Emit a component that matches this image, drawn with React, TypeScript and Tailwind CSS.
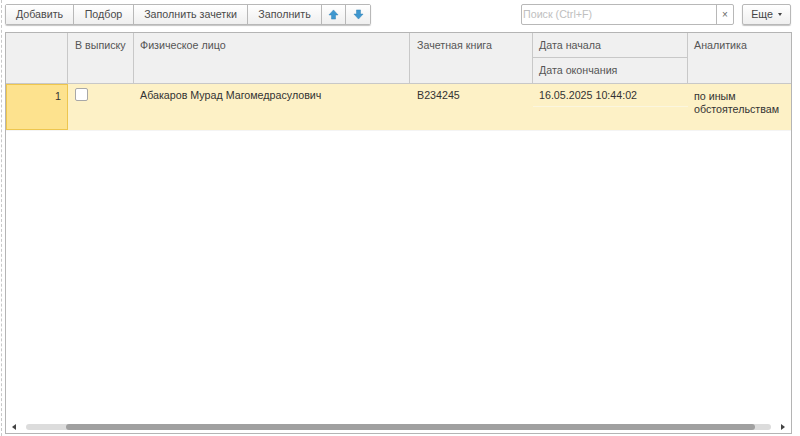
const btn =
  "flex h-full items-center justify-center border-r border-[#b8b8b8] last:border-r-0 bg-gradient-to-b from-[#ffffff] to-[#efefef] text-[#4a4a4a]";

function ArrowIcon({ down }: { down?: boolean }) {
  return (
    <svg width="11" height="11" viewBox="0 0 12 12" className={down ? "rotate-180" : ""}>
      <path d="M6 1 L11 6.5 H8.2 V11 H3.8 V6.5 H1 Z" fill="#3f97cf" stroke="#2f7fb5" strokeWidth="0.5" />
    </svg>
  );
}

export default function App() {
  return (
    <div className="flex h-[436px] w-[800px] flex-col overflow-hidden bg-white pl-[5px] pr-[8px] pt-[4px] font-['Liberation_Sans',Arial,sans-serif] text-[10.7px] text-[#3a3a3a] relative">
      <div className="absolute left-[1px] top-0 h-[436px] border-l border-dashed border-[#c8c8c8]" />

      {/* Toolbar */}
      <div className="flex h-[21px] items-stretch">
        <div className="flex h-[21px] rounded-[2px] border border-[#b8b8b8] shadow-[0_1px_1px_#c4c4c4]">
          <div className={btn + " w-[68px]"}>Добавить</div>
          <div className={btn + " w-[60px]"}>Подбор</div>
          <div className={btn + " w-[114px]"}>Заполнить зачетки</div>
          <div className={btn + " w-[74px]"}>Заполнить</div>
          <div className={btn + " w-[24px]"}><ArrowIcon /></div>
          <div className={btn + " w-[24px]"}><ArrowIcon down /></div>
        </div>

        <div className="ml-[150px] flex h-[21px] w-[213px] rounded-[2px] border border-[#b8b8b8] bg-white">
          <div className="flex flex-1 items-center pl-[1px] text-[#c0c0c0]">Поиск (Ctrl+F)</div>
          <div className="flex w-[17px] items-center justify-center border-l border-[#b8b8b8] text-[10px] text-[#666]">×</div>
        </div>

        <div className="ml-[8px] flex h-[21px] w-[49px] items-center justify-center gap-[5px] rounded-[2px] border border-[#b8b8b8] bg-gradient-to-b from-[#ffffff] to-[#efefef] text-[#444] shadow-[0_1px_1px_#c4c4c4]">
          <span>Еще</span>
          <span className="h-0 w-0 border-x-[2.5px] border-t-[3px] border-x-transparent border-t-[#444]" />
        </div>
      </div>

      {/* Table */}
      <div className="mt-[7px] flex h-[402px] flex-col border border-[#b4b4b4]">
        <div className="grid h-[51px] grid-cols-[62px_66px_276px_123px_155px_1fr] border-b border-[#c8c8c8] bg-[#f0f0f0] text-[#555]">
          <div className="border-r border-[#c8c8c8]" />
          <div className="border-r border-[#c8c8c8] pl-[7px] pt-[4px]">В выписку</div>
          <div className="border-r border-[#c8c8c8] pl-[6px] pt-[4px]">Физическое лицо</div>
          <div className="border-r border-[#c8c8c8] pl-[7px] pt-[4px]">Зачетная книга</div>
          <div className="flex flex-col border-r border-[#c8c8c8]">
            <div className="h-[25px] border-b border-[#c8c8c8] pl-[6px] pt-[4px]">Дата начала</div>
            <div className="pl-[6px] pt-[4px]">Дата окончания</div>
          </div>
          <div className="pl-[6px] pt-[4px]">Аналитика</div>
        </div>

        <div className="grid h-[47px] grid-cols-[62px_66px_276px_123px_155px_1fr] border-b border-[#f4f4f4] bg-[#fdf1c6] text-[#333]">
          <div className="border border-[#eec64e] bg-[#fde28e] pr-[6px] pt-[3px] text-right">1</div>
          <div className="pl-[7px] pt-[4px]">
            <div className="h-[13px] w-[13px] rounded-[2px] border border-[#a8a8a8] bg-white" />
          </div>
          <div className="pl-[6px] pt-[3px]">Абакаров Мурад Магомедрасулович</div>
          <div className="pl-[7px] pt-[3px]">В234245</div>
          <div className="flex flex-col">
            <div className="h-[23px] border-b border-[#fbf6df] pl-[6px] pt-[3px]">16.05.2025 10:44:02</div>
          </div>
          <div className="pl-[6px] pt-[6px] leading-[13px]">по иным обстоятельствам</div>
        </div>

        {/* Scrollbar */}
        <div className="mt-auto flex h-[9px] items-start px-[6px]">
          <span className="h-0 w-0 border-y-[3px] border-r-[4px] border-y-transparent border-r-[#444]" />
          <div className="mx-[10px] flex h-[6px] flex-1 rounded-[3px] bg-[#dcdcdc] pl-[40px] pr-[16px]">
            <div className="h-full w-full rounded-[3px] bg-[#a0a0a0]" />
          </div>
          <span className="h-0 w-0 border-y-[3px] border-l-[4px] border-y-transparent border-l-[#444]" />
        </div>
      </div>
    </div>
  );
}
